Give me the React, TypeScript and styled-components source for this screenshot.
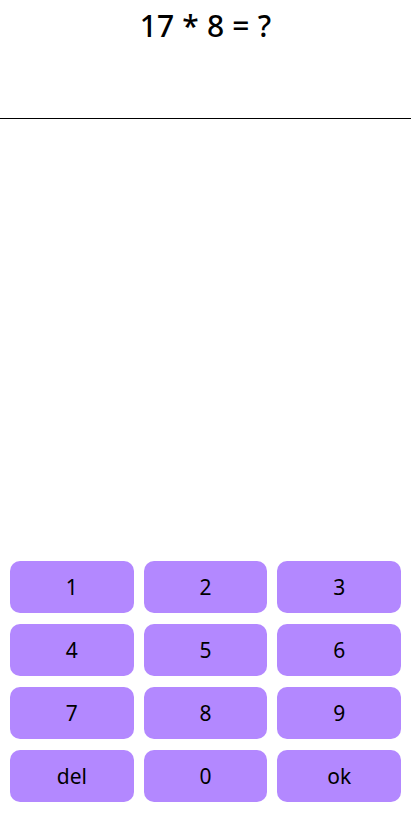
import React from "react";
import styled, { createGlobalStyle } from "styled-components";

const Global = createGlobalStyle`
  html, body { margin: 0; padding: 0; background: #ffffff; }
  body { font-family: "Noto Sans", "Open Sans", sans-serif; color: #000; }
  #root { height: 823px; }
`;

const Screen = styled.div`
  height: 823px;
  display: flex;
  flex-direction: column;
`;

const Header = styled.header`
  height: 119px;
  box-sizing: border-box;
  border-bottom: 1px solid #000;
  display: flex;
  justify-content: center;
  align-items: flex-start;
  padding-top: 5px;
`;

const Question = styled.h1`
  margin: 0;
  font-size: 30px;
  font-weight: 500;
  letter-spacing: 0.2px;
`;

const Spacer = styled.div`
  flex: 1;
`;

const Keypad = styled.div`
  display: grid;
  grid-template-columns: repeat(3, 1fr);
  grid-auto-rows: 52px;
  column-gap: 10px;
  row-gap: 11px;
  padding: 0 10px 21px;
`;

const Key = styled.button`
  border: none;
  border-radius: 10px;
  background: #b388ff;
  color: #000;
  font-family: "Noto Sans", "Open Sans", sans-serif;
  font-size: 21px;
  font-weight: 400;
  display: flex;
  align-items: center;
  justify-content: center;
  padding: 0;
  cursor: pointer;
`;

const keys = ["1", "2", "3", "4", "5", "6", "7", "8", "9", "del", "0", "ok"];

export default function App() {
  return (
    <>
      <Global />
      <Screen>
        <Header>
          <Question>17 * 8 = ?</Question>
        </Header>
        <Spacer />
        <Keypad>
          {keys.map((k) => (
            <Key key={k}>{k}</Key>
          ))}
        </Keypad>
      </Screen>
    </>
  );
}
